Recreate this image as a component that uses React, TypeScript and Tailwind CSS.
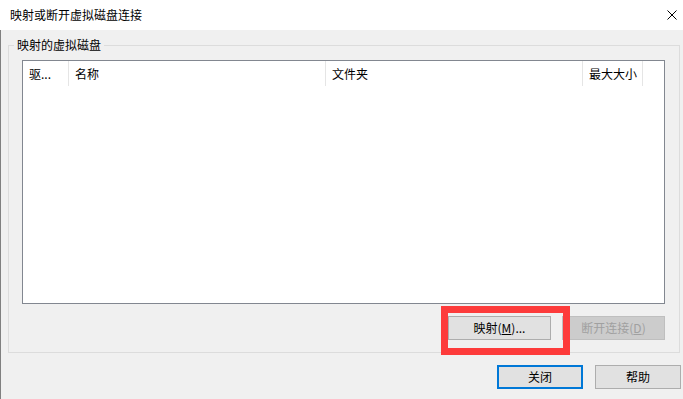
import React from "react";

const font = { fontFamily: '"Microsoft YaHei UI", "Noto Sans CJK SC", sans-serif' };

export default function App() {
  return (
    <div
      className="w-[683px] h-[399px] bg-[#f0f0f0] flex flex-col text-[12px] text-black overflow-hidden"
      style={font}
    >
      {/* Title bar */}
      <div className="h-[30px] bg-white flex items-center justify-between pl-[10px] pr-[6px] shrink-0">
        <span className="leading-none">映射或断开虚拟磁盘连接</span>
        <svg width="10" height="10" viewBox="0 0 10 10" className="mr-[0px]">
          <path d="M0.5 0.5 L9.5 9.5 M9.5 0.5 L0.5 9.5" stroke="#000" strokeWidth="1" fill="none" />
        </svg>
      </div>

      {/* Body */}
      <div className="flex-1 border-l border-[#808080] flex flex-col pl-[7px] pr-[3px] pt-[15px]">
        {/* Group box */}
        <div className="relative w-[672px] h-[308px] border border-[#dcdcdc] flex flex-col pl-[13px] pt-[14px]">
          <span className="absolute left-[5px] top-[-9px] px-[3px] bg-[#f0f0f0] leading-[16px]">
            映射的虚拟磁盘
          </span>
          {/* List view */}
          <div className="w-[643px] h-[244px] border border-[#828790] bg-white flex flex-col">
            <div className="h-[25px] flex">
              <div className="w-[46px] border-r border-[#e5e5e5] pl-[6px] flex items-center">驱...</div>
              <div className="w-[257px] border-r border-[#e5e5e5] pl-[6px] flex items-center">名称</div>
              <div className="w-[257px] border-r border-[#e5e5e5] pl-[6px] flex items-center">文件夹</div>
              <div className="w-[60px] border-r border-[#e5e5e5] pl-[6px] flex items-center">最大大小</div>
            </div>
          </div>
          {/* Buttons */}
          <div className="w-[643px] flex justify-end gap-[11px] mt-[12px]">
            <div className="relative">
              <button className="w-[103px] h-[24px] bg-[#e1e1e1] border border-[#adadad] flex items-center justify-center">
                映射(<span className="underline">M</span>)...
              </button>
              <div className="absolute left-[-7px] top-[-10px] w-[129px] h-[49px] border-[7px] border-[#fd3b3b] pointer-events-none" />
            </div>
            <button className="w-[103px] h-[24px] bg-[#cccccc] border border-[#bfbfbf] text-[#a0a0a0] flex items-center justify-center">
              断开连接(<span className="underline">D</span>)
            </button>
          </div>
        </div>

        {/* Bottom buttons */}
        <div className="w-[673px] flex justify-end gap-[12px] mt-[12px]">
          <button className="w-[86px] h-[24px] bg-[#e1e1e1] border-2 border-[#0078d7] flex items-center justify-center">
            关闭
          </button>
          <button className="w-[86px] h-[24px] bg-[#e1e1e1] border border-[#adadad] flex items-center justify-center">
            帮助
          </button>
        </div>
      </div>
    </div>
  );
}
